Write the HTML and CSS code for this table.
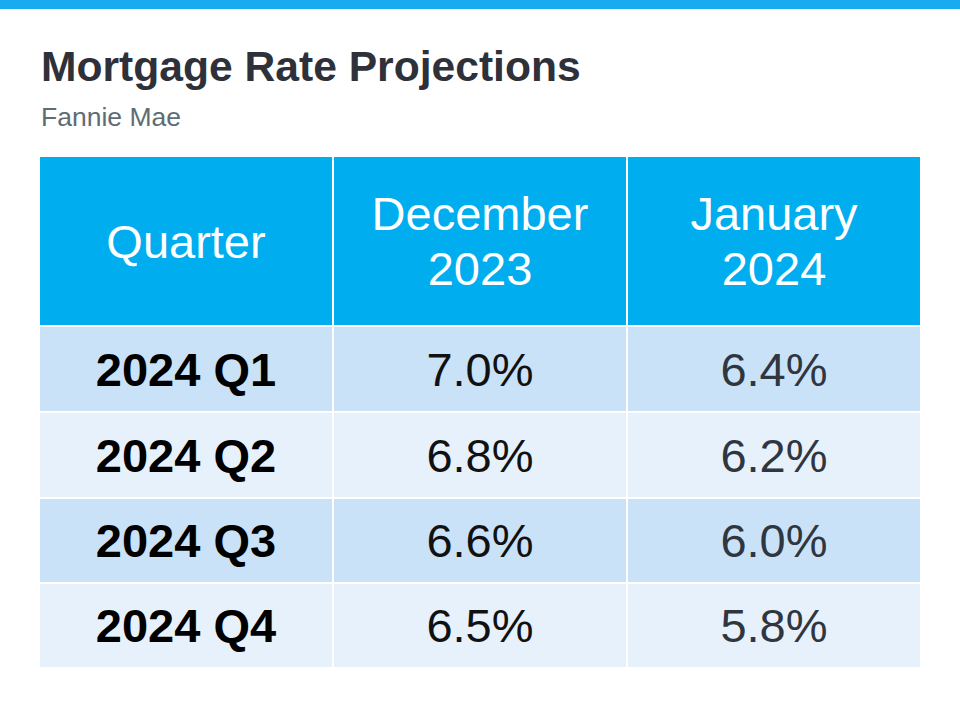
FILE: index.html
```html
<!DOCTYPE html>
<html>
<head>
<meta charset="utf-8">
<link rel="stylesheet" href="styles.css">
</head>
<body>
<div class="topbar"></div>
<header class="head">
  <h1 class="title">Mortgage Rate Projections</h1>
  <p class="source">Fannie Mae</p>
</header>
<div class="table">
  <div class="cell th">Quarter</div>
  <div class="cell th">December<br>2023</div>
  <div class="cell th">January<br>2024</div>

  <div class="cell odd q">2024 Q1</div>
  <div class="cell odd dec">7.0%</div>
  <div class="cell odd jan">6.4%</div>

  <div class="cell even q">2024 Q2</div>
  <div class="cell even dec">6.8%</div>
  <div class="cell even jan">6.2%</div>

  <div class="cell odd q">2024 Q3</div>
  <div class="cell odd dec">6.6%</div>
  <div class="cell odd jan">6.0%</div>

  <div class="cell even q">2024 Q4</div>
  <div class="cell even dec">6.5%</div>
  <div class="cell even jan">5.8%</div>
</div>
</body>
</html>
```

FILE: styles.css
```css
html, body {
  margin: 0;
  padding: 0;
  background: #ffffff;
}
body {
  font-family: "Liberation Sans", Arial, sans-serif;
  width: 960px;
  height: 720px;
  overflow: hidden;
}
.topbar {
  height: 9px;
  background: #17acef;
}
.head {
  padding: 0 0 0 41px;
}
.title {
  margin: 0;
  padding-top: 33px;
  font-size: 42.6px;
  line-height: 48px;
  font-weight: bold;
  color: #2e3139;
}
.source {
  margin: 12px 0 0 0;
  font-size: 26.5px;
  line-height: 30px;
  color: #5e6c74;
}
.table {
  margin: 25px 0 0 40px;
  width: 880px;
  display: grid;
  grid-template-columns: repeat(3, 1fr);
  grid-template-rows: 168px 84px 84px 83px 83px;
  gap: 2px;
}
.cell {
  display: flex;
  align-items: center;
  justify-content: center;
  text-align: center;
  font-size: 47px;
}
.th {
  background: #00adee;
  color: #ffffff;
  line-height: 55px;
  font-size: 47px;
}
.odd {
  background: #cae2f7;
}
.even {
  background: #e6f1fc;
}
.q {
  font-weight: bold;
  color: #000000;
}
.dec {
  color: #111111;
}
.jan {
  color: #30363f;
}
```
